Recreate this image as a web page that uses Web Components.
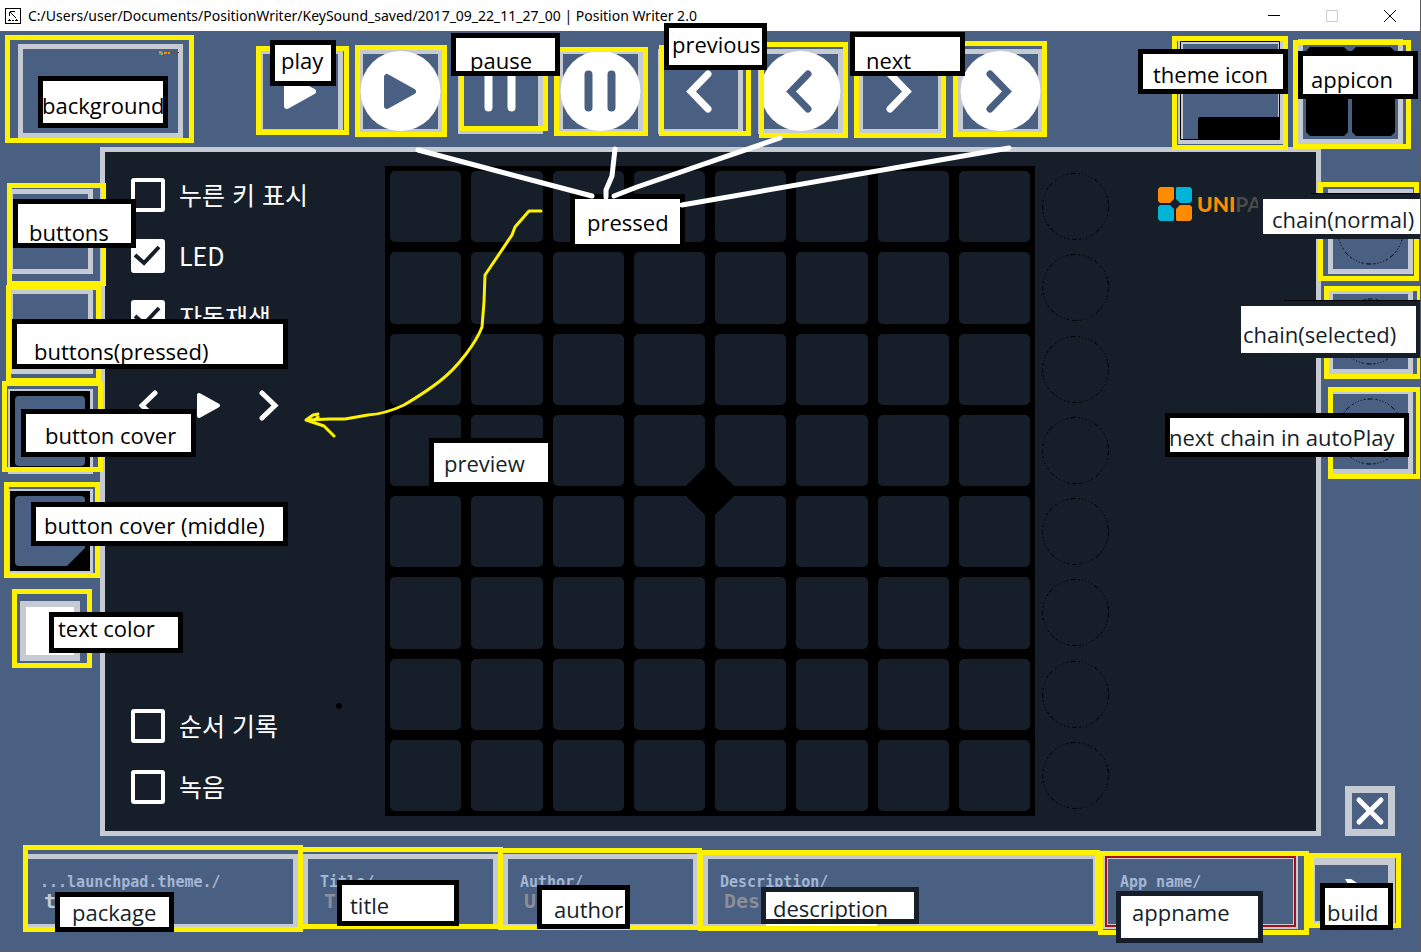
<!DOCTYPE html>
<html lang="ko">
<head>
<meta charset="utf-8">
<meta name="viewport" content="width=device-width, initial-scale=1">
<title>Position Writer 2.0</title>
<style>
html, body { margin: 0; }
body {
  --blue: #496082;
  --frame: #c5cad3;
  --night: #161f29;
  --mark: #fff200;
  background: var(--blue);
  font-family: "Open Sans", "Noto Sans CJK KR", sans-serif;
}
</style>
</head>
<body>
<theme-editor></theme-editor>
<script>
const shared = `
  *, *::before, *::after { box-sizing: border-box; }
  button { font: inherit; color: inherit; margin: 0; padding: 0; border: 0; border-radius: 0; background: none; }
  svg { display: block; }
`;
class Base extends HTMLElement {
  connectedCallback() {
    if (this.shadowRoot) return;
    const t = document.createElement('template');
    t.innerHTML = `<style>${shared}</style>` + this.render();
    this.attachShadow({ mode: 'open' }).append(t.content.cloneNode(true));
  }
}

customElements.define('title-bar', class extends Base {
  render() { return `
    <style>
      :host { display: flex; align-items: center; height: 31px; background: #fff; color: #000; padding: 0 2px 0 5px; }
      span { flex: 1; padding-left: 7px; font-family: "Noto Sans", sans-serif; font-size: 14px; line-height: 30px; white-space: nowrap; overflow: hidden; }
      button { width: 58px; height: 30px; display: grid; place-items: center; }
    </style>
    <svg width="16" height="16" viewBox="0 0 16 16" shape-rendering="crispEdges" aria-hidden="true">
      <path d="M.5.5h15v15H.5z" fill="none" stroke="#000"/>
      <path d="M5 3.5h5M4.5 4v4M5 4l6 6" fill="none" stroke="#000"/>
      <path d="M3 12.5h3M7 12.5h2M10 12.5h3M4 11.5h1M11 11.5h1" stroke="#000"/>
    </svg>
    <span><slot></slot></span>
    <button aria-label="Minimize"><svg width="12" height="12"><path d="M0 5.5h12" stroke="#000"/></svg></button>
    <button aria-label="Maximize" disabled><svg width="12" height="12"><path d="M.5.5h11v11H.5z" fill="none" stroke="#ccc"/></svg></button>
    <button aria-label="Close"><svg width="12" height="12"><path d="M0 0l12 12M12 0L0 12" stroke="#000"/></svg></button>`; }
});

const glyphs = {
  play: c => `<path d="M29 28v29l26-14.500z" fill="${c}" stroke="${c}" stroke-width="6" stroke-linejoin="round"/>`,
  pause: c => `<path d="M30.500 25.500v33M53.500 25.500v33" stroke="${c}" stroke-width="8" stroke-linecap="round"/>`,
  previous: c => `<path d="M50 25L33 42.500L50 60" fill="none" stroke="${c}" stroke-width="7" stroke-linecap="round"/>`,
  next: c => `<path d="M32 25L49 42.500L32 60" fill="none" stroke="${c}" stroke-width="7" stroke-linecap="round"/>`,
  blank: () => '',
  cover: () => `<path fill-rule="evenodd" d="M2 2h80v80H2zM11 7a4 4 0 0 0-4 4v62a4 4 0 0 0 4 4h62a4 4 0 0 0 4-4V11a4 4 0 0 0-4-4z"/>`,
  middle: () => `<path fill-rule="evenodd" d="M2 2h80v80H2zM11 7a4 4 0 0 0-4 4v62a4 4 0 0 0 4 4h48L77 59V11a4 4 0 0 0-4-4z"/>`,
  chain: () => `<circle cx="42.500" cy="42.500" r="32.500" fill="none" stroke="#000" stroke-dasharray="5 3 2 2 1 2 1 2 1 2 2 2"/>`
};
customElements.define('asset-tile', class extends Base {
  render() {
    const kind = this.getAttribute('kind');
    const on = this.hasAttribute('pressed') && kind !== 'blank';
    return `
    <style>
      :host { display: block; }
      button { display: block; width: 85px; height: 85px; box-shadow: inset 0 0 0 5px var(--frame); }
    </style>
    <button aria-label="${kind}"><svg width="85" height="85" viewBox="0 0 85 85" aria-hidden="true">
      ${on ? '<circle cx="42.500" cy="42" r="40" fill="#fff"/>' : ''}${glyphs[kind](on ? '#496082' : '#fff')}
    </svg></button>`; }
});

customElements.define('image-tile', class extends Base {
  render() {
    const art = {
      background: `<svg width="165" height="94" viewBox="0 0 165 94"><path d="M141 7h2v2h-2zM143 9h2v2h-2zM146 8h3v2h-3zM150 8h2v2h-2z" fill="#ff8c00"/><path d="M143 7h2v2h-2zM141 9h2v2h-2z" fill="#00b4d8"/><path d="M153 8h2v2h-2zM156 8h1v2h-1zM158 8h3v1h-3z" fill="#555"/></svg>`,
      theme: `<svg width="105" height="105" viewBox="0 0 105 105"><path d="M2.500 2.500h99v98h-99z" fill="none" stroke="#000"/><path d="M20 80a2 2 0 0 1 2-2h80v22H20z"/></svg>`,
      app: `<svg width="105" height="105" viewBox="0 0 105 105"><path d="M12 8h34l4 4v34l-5 5H12l-4-4V12zM58 8h34l5 4v35l-4 4H59l-5-5V12zM12 54h33l5 5v34l-4 4H12l-4-4V58zM59 54h34l4 4v35l-4 4H58l-4-4V59z"/></svg>`
    };
    const k = this.getAttribute('kind');
    return `
    <style>
      :host { display: block; }
      button { display: block; box-shadow: inset 0 0 0 5px var(--frame); }
    </style>
    <button aria-label="${k} image">${art[k]}</button>`; }
});

customElements.define('tool-row', class extends Base {
  render() { return `
    <style>
      :host { display: flex; align-items: flex-start; height: 116px; padding: 8px 18px 0; }
      .bg { padding-top: 5px; }
      .media { display: flex; gap: 15px; padding: 10px 0 0 75px; }
      .icons { display: flex; gap: 15px; margin-left: auto; }
    </style>
    <image-tile class="bg" kind="background"></image-tile>
    <div class="media">
      <asset-tile kind="play"></asset-tile><asset-tile kind="play" pressed></asset-tile>
      <asset-tile kind="pause"></asset-tile><asset-tile kind="pause" pressed></asset-tile>
      <asset-tile kind="previous"></asset-tile><asset-tile kind="previous" pressed></asset-tile>
      <asset-tile kind="next"></asset-tile><asset-tile kind="next" pressed></asset-tile>
    </div>
    <div class="icons"><image-tile kind="theme"></image-tile><image-tile kind="app"></image-tile></div>`; }
});

customElements.define('check-row', class extends Base {
  render() { return `
    <style>
      :host { display: block; }
      label { display: flex; align-items: flex-start; gap: 14px; height: 34px; color: #fff; font: 400 25px/32px "Noto Sans CJK KR", sans-serif; white-space: nowrap; }
      .box { display: grid; }
      .box > * { grid-area: 1 / 1; }
      input { appearance: none; width: 34px; height: 34px; margin: 0; border: 4px solid #fff; border-radius: 3px; }
      input:checked { background: #fff; }
      svg { visibility: hidden; pointer-events: none; }
      input:checked + svg { visibility: visible; }
    </style>
    <label><span class="box"><input type="checkbox" ${this.hasAttribute('checked') ? 'checked' : ''}>
      <svg width="34" height="34" viewBox="0 0 34 34"><path d="M4 16l9 8L28 8" fill="none" stroke="#161f29" stroke-width="4"/></svg></span>
      <slot></slot></label>`; }
});

customElements.define('control-panel', class extends Base {
  render() { return `
    <style>
      :host { display: flex; flex-direction: column; width: 280px; flex: none; padding: 26px 0 27px 26px; }
      check-row + check-row { margin-top: 27px; }
      nav { display: flex; align-items: center; gap: 38px; padding: 56px 0 0 8px; }
      .end { margin-top: auto; }
    </style>
    <check-row>누른 키 표시</check-row><check-row checked>LED</check-row><check-row checked>자동재생</check-row>
    <nav>
      <button aria-label="Previous"><svg width="20" height="31" viewBox="0 0 20 31"><path d="M16 3L3 15.500 16 28" fill="none" stroke="#fff" stroke-width="5" stroke-linecap="round"/></svg></button>
      <button aria-label="Play"><svg width="24" height="31" viewBox="0 0 24 31"><path d="M2 5v21l19-10.500z" fill="#fff" stroke="#fff" stroke-width="4" stroke-linejoin="round"/></svg></button>
      <button aria-label="Next"><svg width="20" height="31" viewBox="0 0 20 31"><path d="M3 3L16 15.500 3 28" fill="none" stroke="#fff" stroke-width="5" stroke-linecap="round"/></svg></button>
    </nav>
    <div class="end"><check-row>순서 기록</check-row><check-row>녹음</check-row></div>`; }
});

customElements.define('pad-board', class extends Base {
  render() { return `
    <style>
      :host { display: flex; flex: none; padding: 14px 0 15px; }
      .grid { position: relative; display: grid; grid-template: repeat(8, 1fr) / repeat(8, 1fr); gap: 10px; padding: 5px; width: 650px; aspect-ratio: 1; background: #000; }
      .grid button { background: var(--night); border-radius: 5px; }
      .gem { position: absolute; left: calc(50% - 29px); top: calc(50% - 29px); }
      .chains { display: grid; grid-template-rows: repeat(8, 1fr); place-items: center; width: 81px; }
    </style>
    <div class="grid">${Array.from({ length: 64 }, (_, i) => `<button aria-label="Pad ${i + 1}"></button>`).join('')}
      <svg class="gem" width="58" height="58"><path d="M29 0l29 29-29 29L0 29z"/></svg></div>
    <div class="chains">${'<svg width="67" height="67" viewBox="0 0 67 67"><circle cx="33.500" cy="33.500" r="33" fill="none" stroke="#000" stroke-dasharray="5 3 2 2 1 2 1 2 1 2 2 2"/></svg>'.repeat(8)}</div>`; }
});

customElements.define('uni-logo', class extends Base {
  render() { return `
    <style>
      :host { display: flex; align-items: center; gap: 5px; height: 34px; white-space: nowrap; color: #4a4a4a; font: 700 21px/34px Lato, sans-serif; }
      b { color: #ff8c00; }
      svg { flex: none; }
    </style>
    <svg width="34" height="34" viewBox="0 0 34 34"><path fill="#ff8c00" d="M2 0h13l1 1v11l-4 4H2l-2-2V2zM22 18h10l2 2v12l-2 2H19l-1-1V22z"/><path fill="#00b4d8" d="M19 0h13l2 2v12l-2 2H22l-4-4V1zM2 18h10l4 4v11l-1 1H2l-2-2V20z"/></svg>
    <span><b>UNI</b>PA</span>`; }
});

customElements.define('preview-stage', class extends Base {
  render() { return `
    <style>
      :host { display: flex; flex: 1; min-width: 0; border: 5px solid var(--frame); background: var(--night); }
      uni-logo { margin: 35px 0 0 42px; }
    </style>
    <control-panel></control-panel><pad-board></pad-board><uni-logo></uni-logo>`; }
});

customElements.define('asset-column', class extends Base {
  render() { return `
    <style>
      :host { display: flex; flex-direction: column; align-items: flex-start; gap: 15px; flex: none; width: 100px; padding: 42px 0 0 8px; }
      input { appearance: none; width: 60px; height: 60px; margin: 12px 0 0 12px; padding: 0; border: 6px solid var(--frame); background: #fff; }
      input::-webkit-color-swatch-wrapper { padding: 0; }
      input::-webkit-color-swatch { border: 0; border-radius: 0; }
    </style>
    <asset-tile kind="blank"></asset-tile><asset-tile kind="blank" pressed></asset-tile>
    <asset-tile kind="cover"></asset-tile><asset-tile kind="middle"></asset-tile>
    <input type="color" value="#ffffff" aria-label="Text color">`; }
});

customElements.define('chain-column', class extends Base {
  render() { return `
    <style>
      :host { display: flex; flex-direction: column; align-items: flex-end; gap: 15px; flex: none; width: 100px; padding: 42px 8px 0 0; }
      .close { width: 50px; height: 50px; margin: auto 18px 0 0; border: 7px solid var(--frame); }
    </style>
    <asset-tile kind="chain"></asset-tile><asset-tile kind="chain"></asset-tile><asset-tile kind="chain"></asset-tile>
    <button class="close" aria-label="Close editor"><svg width="36" height="36" viewBox="0 0 36 36"><path d="M7 7l22 22M29 7L7 29" stroke="#fff" stroke-width="5" stroke-linecap="round"/></svg></button>`; }
});

customElements.define('text-field', class extends Base {
  render() { 
    const a = n => this.getAttribute(n) || '';
    return `
    <style>
      :host { display: block; height: 75px; min-width: 0; border: 5px solid var(--frame); font-family: "DejaVu Sans Mono", monospace; font-weight: 700; }
      :host([alert]) { outline: 2px solid #a80e14; outline-offset: -4px; }
      label { display: block; padding: 14px 0 0 12px; font-size: 15px; line-height: 18px; color: #a3b6d3; white-space: nowrap; overflow: hidden; }
      input { display: block; width: 100%; height: 20px; margin: 0; padding: 0 0 0 16px; border: 0; outline: 0; background: none; font: 700 20px/20px "DejaVu Sans Mono", monospace; color: #c5cad3; }
      input::placeholder { color: #8b8e96; opacity: 1; }
    </style>
    <label for="f"><slot></slot></label>
    <input id="f" value="${a('value')}" placeholder="${a('placeholder')}">`; }
});

customElements.define('info-row', class extends Base {
  render() { return `
    <style>
      :host { display: flex; gap: 5px; padding: 18px 26px 22px 23px; }
      text-field { width: 195px; flex: none; }
      .wide { width: 275px; }
      .grow { flex: 1; }
      .build { width: 87px; height: 70px; margin: 4px 0 0 5px; border: 7px solid var(--frame); display: grid; place-items: center; }
    </style>
    <text-field class="wide" value="t">...launchpad.theme./</text-field>
    <text-field placeholder="T">Title/</text-field>
    <text-field placeholder="U">Author/</text-field>
    <text-field class="grow" placeholder="Des">Description/</text-field>
    <text-field alert>App name/</text-field>
    <button class="build" aria-label="Build"><svg width="40" height="30" viewBox="0 0 40 30"><path d="M13 1h6l6 4v6h-6z" fill="#fff"/></svg></button>`; }
});

/* One caption card. The slot holds its words; the box clips them. */
customElements.define('note-card', class extends Base {
  render() { return `
    <style>
      :host { position: absolute; box-sizing: border-box; border: 5px solid var(--edge, #000); background: #fff; color: var(--ink, #000); font-size: 22px; line-height: 22px; white-space: nowrap; overflow: hidden; }
    </style><slot></slot>`; }
});

/* Hand-drawn notes that lie on top of the editor. Boxes are [side, offset, top, width, height]. */
const frames = [
  ['left',5,35,189,108],['left',256,46,93,89],['left',355,45,92,92],['left',459,50,89,81],['left',554,47,94,89],
  ['left',659,45,92,91],['left',759,42,89,96],['left',854,50,92,88],['left',953,41,94,96],['right',133,36,116,114],
  ['right',10,40,118,109],['left',7,183,99,103],['left',6,285,95,98],['left',2,381,101,91],['left',4,482,96,96],
  ['left',12,589,80,79],['right',2,182,101,99],['right',-1,286,98,93],['right',0,387,93,92],['left',23,845,280,87],
  ['left',298,847,205,82],['left',498,848,204,82],['left',698,850,402,81],['right',112,851,211,84],['right',20,853,92,75]
];
const notes = [
  ['background','left',38,76,130,52,-1,13],['play','left',270,40,66,46,6,4],['pause','left',451,33,109,43,14,11],
  ['previous','left',664,23,103,47,3,5],['next','left',850,32,115,44,11,12],['theme icon','right',133,49,150,45,10,9],
  ['appicon','right',3,51,120,48,8,12],['pressed','left',570,194,115,55,12,12],['buttons','left',13,199,123,49,11,17],
  ['buttons(pressed)','left',12,319,276,50,17,16],['button cover','left',21,409,175,48,19,10],
  ['button cover (middle)','left',31,502,257,44,8,7],['text color','left',49,612,134,41,4,0],
  ['preview','left',429,438,124,49,10,9,'#000','#161f29'],['chain(normal)','right',-5,194,168,45,9,9,'#161f29','#161f29'],
  ['chain(selected)','right',0,301,185,57,2,17,'#161f29','#161f29'],['next chain in autoPlay','right',12,413,244,44,-1,8,'#000','#161f29'],
  ['package','left',55,892,119,40,12,4,'#000','#161f29'],['title','left',337,880,122,46,8,9,'#000','#161f29'],
  ['author','left',537,885,93,44,12,8,'#000','#161f29'],['description','left',761,887,158,37,7,5,'#161f29','#161f29'],
  ['appname','right',158,891,147,52,11,5,'#161f29','#161f29'],['build','right',28,883,73,47,2,13,'#000','#161f29']
];
customElements.define('note-layer', class extends Base {
  render() { return `
    <style>
      :host { position: absolute; inset: 0; overflow: hidden; pointer-events: none; }
      i { position: absolute; border: 5px solid var(--mark); }
      svg { position: absolute; left: 0; top: 0; }
      .rule { position: absolute; height: 1px; background: #000; }
    </style>
    ${frames.map(([s, x, y, w, h]) => `<i style="${s}:${x}px;top:${y}px;width:${w}px;height:${h}px"></i>`).join('')}
    ${notes.map(([t, s, x, y, w, h, px, py, edge = '#000', ink = '#000']) =>
      `<note-card style="${s}:${x}px;top:${y}px;width:${w}px;height:${h}px;text-indent:${px}px;padding-top:${py}px;--edge:${edge};--ink:${ink}">${t}</note-card>`).join('')}
    <div class="rule" style="right:0;top:193px;width:110px"></div>
    <div class="rule" style="right:0;top:300px;width:137px"></div>
    <svg width="1060" height="952" viewBox="0 0 1060 952" fill="none" stroke-linecap="round" stroke-linejoin="round" aria-hidden="true">
      <path d="M766 925h111" stroke="#fff" stroke-width="2" stroke-linecap="butt"/>
      <path d="M418 150L592 196M615 149L612 176 606 190V197M780 138L637 187 614 196M1009 148L682 205" stroke="#fff" stroke-width="5"/>
      <path d="M541 211H529L515 227 512 235 485 275 484 302 482 327Q478 338 466 354T440 381 404 405Q385 414 368 415L345 419H330L306 420L313 415 318 414M306 420L324 426 334 436M312 422L318 417" stroke="#fff200" stroke-width="3"/>
      <circle cx="339" cy="706" r="3" fill="#000"/>
    </svg>`; }
});

customElements.define('theme-editor', class extends Base {
  render() { return `
    <style>
      :host { display: block; position: relative; min-height: 100vh; min-width: 1360px; background: var(--blue); }
      :host::after { content: ""; position: absolute; inset: 0; border: solid #5b5b60; border-width: 0 1px 1px 0; pointer-events: none; }
      main { display: flex; }
    </style>
    <title-bar>C:/Users/user/Documents/PositionWriter/KeySound_saved/2017_09_22_11_27_00 | Position Writer 2.0</title-bar>
    <tool-row></tool-row>
    <main><asset-column></asset-column><preview-stage></preview-stage><chain-column></chain-column></main>
    <info-row></info-row>
    <note-layer></note-layer>`; }
});
</script>
</body>
</html>
